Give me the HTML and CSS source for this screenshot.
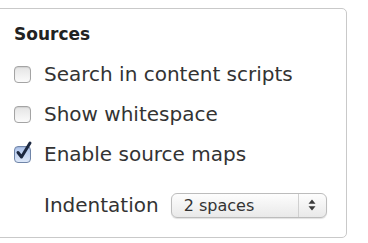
FILE: index.html
```html
<!DOCTYPE html>
<html>
<head>
<meta charset="utf-8">
<link rel="stylesheet" href="styles.css">
</head>
<body>
<div class="panel">
  <div class="heading">Sources</div>
  <div class="row">
    <span class="box"></span>
    <span class="label">Search in content scripts</span>
  </div>
  <div class="row">
    <span class="box"></span>
    <span class="label">Show whitespace</span>
  </div>
  <div class="row">
    <span class="box checked">
      <svg width="21" height="24" viewBox="0 0 21 24" class="check"><path d="M4 13.5 L7.5 18 L16 4" fill="none" stroke="#1c2840" stroke-width="3" stroke-linecap="round" stroke-linejoin="round"/></svg>
    </span>
    <span class="label">Enable source maps</span>
  </div>
  <div class="row indent">
    <span class="label">Indentation</span>
    <div class="select">
      <span class="sel-text">2 spaces</span>
      <span class="sel-arrows">
        <svg width="8" height="12" viewBox="0 0 8 12"><path d="M4 0.5 L7.5 4.8 L0.5 4.8 Z M4 11.5 L7.5 7.2 L0.5 7.2 Z" fill="#3a3a3a"/></svg>
      </span>
    </div>
  </div>
</div>
</body>
</html>
```

FILE: styles.css
```css
html, body {
  margin: 0;
  padding: 0;
  background: #ffffff;
}
body {
  font-family: "DejaVu Sans", "Liberation Sans", sans-serif;
  color: #333333;
}
.panel {
  box-sizing: border-box;
  margin: 8px 0 0 -6px;
  width: 353px;
  height: 230px;
  border: 1px solid #c9c9c9;
  border-radius: 5px;
  padding: 0 0 0 19px;
  display: flex;
  flex-direction: column;
}
.heading {
  font-weight: bold;
  font-size: 17px;
  line-height: 20px;
  color: #222222;
  margin-top: 15px;
  margin-bottom: 10px;
}
.row {
  height: 40px;
  display: flex;
  align-items: center;
  gap: 13px;
}
.label {
  font-size: 20px;
  line-height: 40px;
  white-space: nowrap;
}
.box {
  position: relative;
  box-sizing: border-box;
  width: 17px;
  height: 17px;
  border: 1px solid #a4a4a4;
  border-radius: 4px;
  background: linear-gradient(#e4e4e4, #fbfbfb);
  box-shadow: inset 0 1px 1px rgba(0,0,0,0.08);
  flex: none;
}
.box.checked {
  border-color: #7085a8;
  background: linear-gradient(#aec4ec, #dde8f9);
}
.check {
  position: absolute;
  left: -1px;
  top: -8px;
}
.indent {
  margin-top: 11px;
  padding-left: 30px;
  gap: 12px;
}
.select {
  box-sizing: border-box;
  flex: none;
  width: 156px;
  height: 25px;
  border: 1px solid #bcbcbc;
  border-radius: 6px;
  background: linear-gradient(#fdfdfd, #e9e9e9);
  box-shadow: 0 1px 1px rgba(0,0,0,0.12);
  display: flex;
  align-items: center;
}
.sel-text {
  flex: 1;
  font-size: 16px;
  padding-left: 12px;
  color: #333333;
}
.sel-arrows {
  width: 27px;
  height: 100%;
  border-left: 1px solid #d0d0d0;
  display: flex;
  align-items: center;
  justify-content: center;
}
```
